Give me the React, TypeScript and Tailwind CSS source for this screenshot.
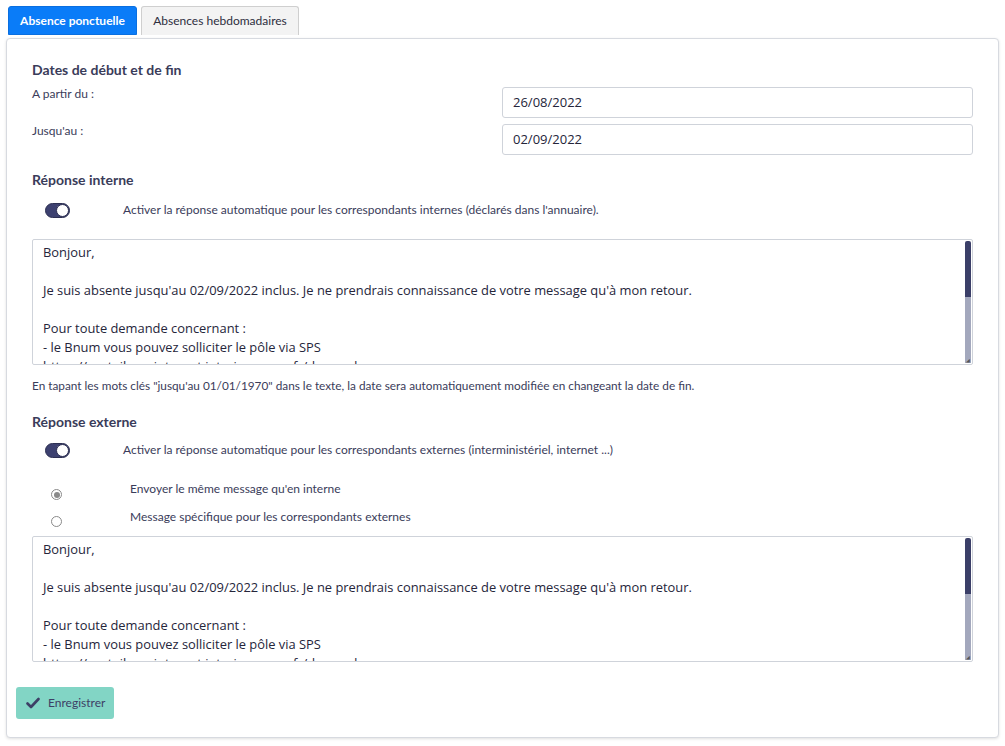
import React from "react";

const label = "font-['Lato','Liberation_Sans',sans-serif]";
const body = "font-['Open_Sans','Liberation_Sans',sans-serif]";

function Toggle() {
  return (
    <div className="w-[25px] h-[15px] rounded-full bg-[#3d4170] border border-[#2c2f52] flex items-center justify-end">
      <div className="w-[13px] h-[13px] rounded-full bg-white border border-[#2c2f52]" />
    </div>
  );
}

function Area() {
  const lines = [
    "Bonjour,",
    "\u00a0",
    "Je suis absente jusqu'au 02/09/2022 inclus. Je ne prendrais connaissance de votre message qu'à mon retour.",
    "\u00a0",
    "Pour toute demande concernant :",
    "- le Bnum vous pouvez solliciter le pôle via SPS",
    "https://portail-sps.intranet.interieur.gouv.fr/demande-sps",
  ];
  return (
    <div className="relative ml-[25px] mr-[25px] h-[126px] border border-[#cfd3da] rounded-[2px] bg-white flex">
      <div className={`flex-1 overflow-hidden pl-[10px] pt-[3px] text-[12.9px] leading-[19px] text-[#25253a] ${body}`}>
        {lines.map((l, i) => (
          <div key={i} className="whitespace-nowrap">{l}</div>
        ))}
      </div>
      <div className="w-[6px] mr-[1px] my-[1px] flex flex-col">
        <div className="h-[56px] bg-[#3b3f68] rounded-t-[2px]" />
        <div className="flex-1 bg-[#a3a8bd]" />
      </div>
      <div className="absolute right-[1px] bottom-[1px] w-[5px] h-[5px] text-[5px] leading-[5px] text-[#555]">◢</div>
    </div>
  );
}

export default function App() {
  return (
    <div className={`w-[1005px] h-[746px] bg-white text-[#3a3c5a] ${label}`}>
      <div className="pl-[8px] pt-[6px] flex gap-[4px]">
        <div className="w-[129px] h-[29px] bg-[#0a7cf8] border border-[#0a6fe0] rounded-t-[3px] text-white text-[12px] font-bold flex items-center justify-center">
          Absence ponctuelle
        </div>
        <div className="w-[158px] h-[29px] bg-[#f3f3f3] border border-b-0 border-[#cfcfcf] rounded-t-[3px] text-[#2e2e3e] text-[12px] flex items-center justify-center">
          Absences hebdomadaires
        </div>
      </div>
      <div className="ml-[6px] mt-[3px] w-[993px] h-[700px] border border-[#d7dae0] rounded-[4px] shadow-[0_1px_3px_rgba(0,0,0,0.12)] bg-white pt-[22px]">
        <div className="pl-[25px] text-[14px] font-bold h-[18px] leading-[18px]">Dates de début et de fin</div>
        <div className="mt-[8px] flex items-start">
          <div className="pl-[25px] flex-1 text-[12px] leading-[14px]">A partir du :</div>
          <div className={`w-[471px] mr-[25px] h-[31px] border border-[#cfd3da] rounded-[3px] flex items-center pl-[10px] text-[13px] text-[#25253a] ${body}`}>26/08/2022</div>
        </div>
        <div className="mt-[6px] flex items-start">
          <div className="pl-[25px] flex-1 text-[12px] leading-[14px]">Jusqu'au :</div>
          <div className={`w-[471px] mr-[25px] h-[31px] border border-[#cfd3da] rounded-[3px] flex items-center pl-[10px] text-[13px] text-[#25253a] ${body}`}>02/09/2022</div>
        </div>

        <div className="mt-[16px] pl-[25px] text-[14px] font-bold leading-[18px]">Réponse interne</div>
        <div className="mt-[13px] flex items-center h-[16px]">
          <div className="w-[116px] pl-[38px]"><Toggle /></div>
          <div className="text-[12px]">Activer la réponse automatique pour les correspondants internes (déclarés dans l'annuaire).</div>
        </div>
        <div className="mt-[21px]"><Area /></div>
        <div className="mt-[14px] pl-[25px] text-[11.8px] leading-[14px]">
          En tapant les mots clés "jusqu'au 01/01/1970" dans le texte, la date sera automatiquement modifiée en changeant la date de fin.
        </div>

        <div className="mt-[20px] pl-[25px] text-[14px] font-bold leading-[18px]">Réponse externe</div>
        <div className="mt-[11px] flex items-center h-[16px]">
          <div className="w-[116px] pl-[38px]"><Toggle /></div>
          <div className="text-[12px]">Activer la réponse automatique pour les correspondants externes (interministériel, internet ...)</div>
        </div>
        <div className="mt-[24px] flex items-start h-[22px]">
          <div className="w-[123px] pl-[44px] pt-[7px]">
            <div className="w-[11px] h-[11px] rounded-full border border-[#8a8a8a] flex items-center justify-center">
              <div className="w-[6px] h-[6px] rounded-full bg-[#8a8a8a]" />
            </div>
          </div>
          <div className="text-[12px] leading-[14px]">Envoyer le même message qu'en interne</div>
        </div>
        <div className="mt-[6px] flex items-start h-[22px]">
          <div className="w-[123px] pl-[44px] pt-[6px]">
            <div className="w-[11px] h-[11px] rounded-full border border-[#8a8a8a]" />
          </div>
          <div className="text-[12px] leading-[14px]">Message spécifique pour les correspondants externes</div>
        </div>
        <div className="mt-[4px]"><Area /></div>

        <div className="mt-[25px] pl-[9px]">
          <div className="w-[98px] h-[32px] rounded-[3px] bg-[#82d5c5] flex items-center pl-[10px] gap-[8px] text-[12px] text-[#3d3f66]">
            <svg width="14" height="12" viewBox="0 0 14 12">
              <path d="M1.5 6.5 L5 10 L12.5 2" fill="none" stroke="#3d3f66" strokeWidth="2.6" strokeLinecap="round" strokeLinejoin="round" />
            </svg>
            Enregistrer
          </div>
        </div>
      </div>
    </div>
  );
}
